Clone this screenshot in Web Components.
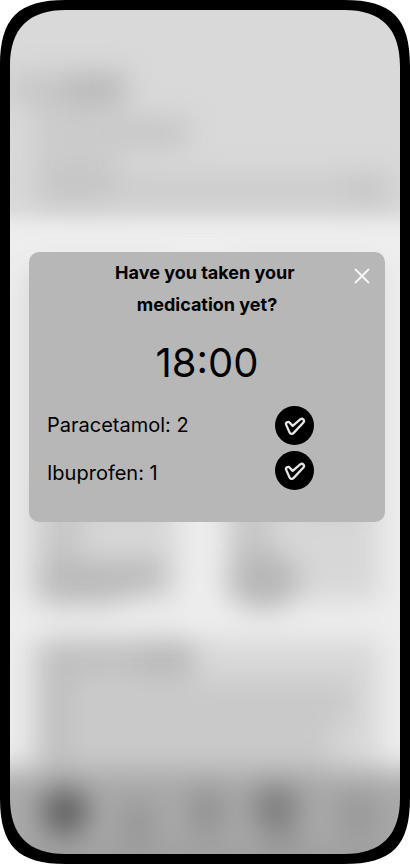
<!DOCTYPE html>
<html lang="en"><head><meta charset="utf-8"><title>Medication reminder</title>
<style>html,body{margin:0;background:#fff}body{width:410px;height:864px;overflow:hidden;font-family:Inter,"Liberation Sans",sans-serif;color:#000}</style></head>
<body>
<phone-frame>
  <blurred-home slot="backdrop"></blurred-home>
  <reminder-dialog>
    <span slot="title">Have you taken your&nbsp;<br>medication yet?</span>
    <span slot="time">18:00</span>
    <medication-row>Paracetamol: 2</medication-row>
    <medication-row>Ibuprofen: 1</medication-row>
  </reminder-dialog>
</phone-frame>
<script>
const define=(name,html)=>customElements.define(name,class extends HTMLElement{
  constructor(){super();this.attachShadow({mode:'open'}).innerHTML=html;}
});
define('blurred-home',`<style>:host{display:block;width:410px;height:864px}svg{display:block}</style>
<svg width="410" height="864" viewBox="0 0 410 864">
<defs>
<filter id="b" filterUnits="userSpaceOnUse" x="-80" y="-80" width="570" height="1030" color-interpolation-filters="sRGB"><feGaussianBlur stdDeviation="14"/></filter>
<filter id="h" filterUnits="userSpaceOnUse" x="-80" y="-80" width="570" height="1030" color-interpolation-filters="sRGB"><feGaussianBlur stdDeviation="9"/></filter>
<clipPath id="c"><path d="M9 66C9 29 29 9 66 9H344C381 9 401 29 401 66V798C401 835 381 855 344 855H66C29 855 9 835 9 798Z"/></clipPath>
</defs>
<g clip-path="url(#c)">
<rect width="410" height="864" fill="#eee"/>
<g filter="url(#h)">
<rect x="-80" y="-80" width="570" height="298" fill="#d9d9d9"/>
</g><g filter="url(#b)">
<rect x="10" y="74" width="118" height="28" fill="#c5c5c5"/>
<rect x="66" y="74" width="58" height="26" fill="#b6b6b6"/>
<rect x="34" y="118" width="154" height="30" fill="#c5c5c5"/>
<rect x="34" y="102" width="86" height="75" fill="#cbcbcb"/>
<rect x="32" y="175" width="362" height="28" fill="#cbcbcb"/>
<rect x="46" y="175" width="66" height="28" fill="#c3c3c3"/>
<rect x="348" y="175" width="34" height="28" fill="#c3c3c3"/>
<rect x="26" y="270" width="152" height="331" fill="#d7d7d7"/>
<rect x="225" y="270" width="155" height="331" fill="#d7d7d7"/>
<rect x="45" y="485" width="35" height="75" fill="#c5c5c5"/>
<rect x="232" y="485" width="38" height="75" fill="#c5c5c5"/>
<rect x="80" y="502" width="80" height="12" fill="#cacaca"/>
<rect x="296" y="497" width="66" height="18" fill="#cbcbcb"/>
<path d="M42 560H165V584L108 605H42Z" fill="#bababa"/>
<ellipse cx="264" cy="581" rx="36" ry="29" fill="#b7b7b7"/>
<rect x="28" y="640" width="352" height="154" fill="#d7d7d7"/>
<path d="M42 639H194V677H78V769H42Z" fill="#bfbfbf"/>
<rect x="142" y="644" width="50" height="32" fill="#b7b7b7"/>
<path d="M84 682H354V714L330 732V782H84Z" fill="#c9c9c9"/>
<rect x="-80" y="770" width="570" height="180" fill="#a9a9a9"/>
<circle cx="65" cy="812" r="24" fill="#626262"/>
<ellipse cx="137" cy="824" rx="18" ry="24" fill="#969696"/>
<ellipse cx="207" cy="812" rx="19" ry="25" fill="#929292"/>
<ellipse cx="276" cy="808" rx="24" ry="24" fill="#7f7f7f"/>
<ellipse cx="282" cy="838" rx="18" ry="10" fill="#929292"/>
<ellipse cx="358" cy="816" rx="23" ry="24" fill="#999"/>
<rect x="-80" y="846" width="570" height="80" fill="#9f9f9f"/>
</g></g>
<path fill-rule="evenodd" fill="#000" d="M0 66C0 18 18 0 66 0H344C392 0 410 18 410 66V798C410 846 392 864 344 864H66C18 864 0 846 0 798ZM10 66C10 28.500 28.500 10 66 10H344C381.500 10 400 28.500 400 66V798C400 835.500 381.500 854 344 854H66C28.500 854 10 835.500 10 798Z"/>
</svg>`);
define('phone-frame',`<style>:host{display:grid;width:410px;height:864px;overflow:hidden}
.layer{grid-area:1/1;min-width:0}.content{position:relative;padding:252px 25px 0 29px}</style>
<div class="layer"><slot name="backdrop"></slot></div><div class="layer content"><slot></slot></div>`);
define('close-button',`<style>:host{display:block;width:16px;height:16px}svg{display:block}</style>
<svg width="16" height="16"><path d="M1.500 1.500L14.500 14.500M14.500 1.500L1.500 14.500" stroke="#f5f5f5" stroke-width="2" stroke-linecap="round"/></svg>`);
define('reminder-dialog',`<style>:host{display:block;box-sizing:border-box;position:relative;height:270px;border-radius:10px;background:#b7b7b7;padding:5px 18px 0}
close-button{position:absolute;right:15px;top:16px}
.title{font-size:18px;font-weight:700;line-height:32px;text-align:center}
.time{font-size:40px;line-height:48px;text-align:center;margin-top:18px}
.list{display:grid;gap:6px;margin-top:19px}</style>
<close-button></close-button><div class="title"><slot name="title"></slot></div>
<div class="time"><slot name="time"></slot></div><div class="list"><slot></slot></div>`);
define('check-badge',`<style>:host{display:block;width:39px;height:39px}svg{display:block}</style>
<svg width="39" height="39" viewBox="0 0 39 39"><circle cx="19.500" cy="19.500" r="19.500"/>
<path d="M14.600 16.600C13.200 14.900 10.200 16.600 11.200 18.900L14.400 26.100C15.100 28.200 17.300 28.400 18.700 26.900L28.200 16.800C30.400 14.400 27.600 11.600 25.200 13.400L17.700 19.900Z" fill="none" stroke="#e6e6e6" stroke-width="2.300" stroke-linejoin="round"/></svg>`);
define('medication-row',`<style>:host{display:grid;grid-template-columns:228px 39px;height:39px;font-size:20px;line-height:39px}
:host(:last-of-type) .name{padding-top:3px}</style>
<div class="name"><slot></slot></div><check-badge></check-badge>`);
</script></body></html>
